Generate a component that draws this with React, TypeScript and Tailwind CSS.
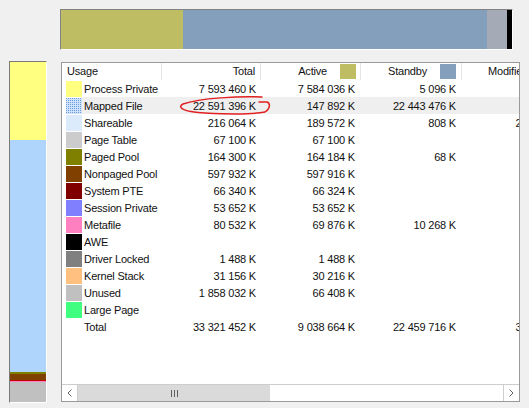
const rows: { name: string; color: string; total: string; active: string; standby: string; modified: string; pattern?: boolean }[] = [
  { name: "Process Private", color: "bg-[#ffff80]", total: "7 593 460 K", active: "7 584 036 K", standby: "5 096 K", modified: "4 328 K" },
  { name: "Mapped File", color: "bg-[#cfe2fb]", total: "22 591 396 K", active: "147 892 K", standby: "22 443 476 K", modified: "28 K", pattern: true },
  { name: "Shareable", color: "bg-[#dcebfc]", total: "216 064 K", active: "189 572 K", standby: "808 K", modified: "25 684 K" },
  { name: "Page Table", color: "bg-[#cccccc]", total: "67 100 K", active: "67 100 K", standby: "", modified: "" },
  { name: "Paged Pool", color: "bg-[#808000]", total: "164 300 K", active: "164 184 K", standby: "68 K", modified: "48 K" },
  { name: "Nonpaged Pool", color: "bg-[#804000]", total: "597 932 K", active: "597 916 K", standby: "", modified: "16 K" },
  { name: "System PTE", color: "bg-[#800000]", total: "66 340 K", active: "66 324 K", standby: "", modified: "16 K" },
  { name: "Session Private", color: "bg-[#8080ff]", total: "53 652 K", active: "53 652 K", standby: "", modified: "" },
  { name: "Metafile", color: "bg-[#ff80c0]", total: "80 532 K", active: "69 876 K", standby: "10 268 K", modified: "388 K" },
  { name: "AWE", color: "bg-black", total: "", active: "", standby: "", modified: "" },
  { name: "Driver Locked", color: "bg-[#808080]", total: "1 488 K", active: "1 488 K", standby: "", modified: "" },
  { name: "Kernel Stack", color: "bg-[#ffc080]", total: "31 156 K", active: "30 216 K", standby: "", modified: "940 K" },
  { name: "Unused", color: "bg-[#c0c0c0]", total: "1 858 032 K", active: "66 408 K", standby: "", modified: "" },
  { name: "Large Page", color: "bg-[#40ff80]", total: "", active: "", standby: "", modified: "" },
];

function Chevron({ left }: { left?: boolean }) {
  return (
    <svg width="5" height="8" viewBox="0 0 5 8">
      <path d={left ? "M4.5 0.5 L1 4 L4.5 7.5" : "M0.5 0.5 L4 4 L0.5 7.5"} fill="none" stroke="#606060" strokeWidth="1" />
    </svg>
  );
}

function DotSwatch() {
  return (
    <svg width="16" height="16">
      <defs>
        <pattern id="dots" width="2" height="2" patternUnits="userSpaceOnUse">
          <rect width="2" height="2" fill="#cfe2fb" />
          <rect width="1" height="1" fill="#6c9be0" />
        </pattern>
      </defs>
      <rect width="16" height="16" fill="url(#dots)" />
    </svg>
  );
}

export default function App() {
  return (
    <div className="relative w-[529px] h-[408px] overflow-hidden bg-[#f0f0f0] font-['Liberation_Sans',Arial,sans-serif] text-[11px] tracking-[-0.2px] text-[#111]">
      {/* top usage bar */}
      <div className="pt-[9px] pl-[60px]">
        <div className="flex w-[453px] h-[41px] border border-t-[#828282] border-l-[#828282] border-b-white border-r-white">
          <div className="w-[122px] bg-[#bfbd63]" />
          <div className="w-[304px] bg-[#839fbc]" />
          <div className="w-[20px] bg-[#a4abb6]" />
          <div className="w-[5px] bg-black" />
        </div>
      </div>

      <div className="flex mt-[11px]">
        {/* left vertical bar */}
        <div className="ml-[9px] w-[38px] h-[342px] flex flex-col border border-t-[#7a7a7a] border-l-[#7a7a7a] border-b-white border-r-white">
          <div className="h-[78px] bg-[#ffff80]" />
          <div className="h-[232px] bg-[#b0d5fc]" />
          <div className="h-[2px] bg-[#808000]" />
          <div className="h-[6px] bg-[#804000]" />
          <div className="h-[1px] bg-[#c00000]" />
          <div className="h-[1px] bg-[#ff80c0]" />
          <div className="h-[20px] bg-[#c0c0c0]" />
        </div>

        {/* table */}
        <div className="ml-[14px] mt-[1px] w-[459px] h-[340px] flex flex-col border border-[#9a9a9a] bg-white overflow-hidden">
          <div className="flex h-[17px] items-center whitespace-nowrap">
            <div className="w-[100px] shrink-0 h-full pl-[5px] flex items-center border-r border-[#e5e5e5]">Usage</div>
            <div className="w-[99px] shrink-0 h-full pr-[5px] flex items-center justify-end border-r border-[#e5e5e5]">Total</div>
            <div className="w-[100px] shrink-0 h-full flex items-center justify-end border-r border-[#e5e5e5]">
              <span className="mr-[13px]">Active</span>
              <div className="w-[16px] h-[15px] mr-[4px] bg-[#bfbd63]" />
            </div>
            <div className="w-[101px] shrink-0 h-full flex items-center justify-end border-r border-[#e5e5e5]">
              <span className="mr-[13px]">Standby</span>
              <div className="w-[16px] h-[15px] mr-[5px] bg-[#839fbc]" />
            </div>
            <div className="w-[100px] shrink-0 h-full flex items-center justify-end">
              <span className="mr-[13px]">Modified</span>
              <div className="w-[16px] h-[15px] mr-[5px] bg-[#d07070]" />
            </div>
          </div>

          {rows.map((r) => (
            <div key={r.name} className="flex h-[17px] pt-[1px] leading-[16px] whitespace-nowrap">
              <div className="w-[20px] shrink-0 pl-[4px]">
                {r.pattern ? <DotSwatch /> : <div className={`w-[16px] h-[16px] ${r.color}`} />}
              </div>
              <div className={`flex -mt-[1px] pt-[1px] h-[17px] ${r.name === "Mapped File" ? "bg-[#efefef]" : ""}`}>
                <div className="w-[80px] shrink-0 pl-[2px]">{r.name}</div>
                <div className="w-[99px] shrink-0 pr-[5px] text-right">{r.total}</div>
                <div className="w-[100px] shrink-0 pr-[6px] text-right">{r.active}</div>
                <div className="w-[101px] shrink-0 pr-[6px] text-right">{r.standby}</div>
                <div className="w-[100px] shrink-0 pr-[4px] text-right">{r.modified}</div>
              </div>
            </div>
          ))}
          <div className="flex h-[17px] pt-[1px] leading-[16px] whitespace-nowrap">
            <div className="w-[20px] shrink-0" />
            <div className="w-[80px] shrink-0 pl-[2px]">Total</div>
            <div className="w-[99px] shrink-0 pr-[5px] text-right">33 321 452 K</div>
            <div className="w-[100px] shrink-0 pr-[6px] text-right">9 038 664 K</div>
            <div className="w-[101px] shrink-0 pr-[6px] text-right">22 459 716 K</div>
            <div className="w-[100px] shrink-0 pr-[4px] text-right">31 448 K</div>
          </div>

          <div className="flex-1" />

          {/* horizontal scrollbar */}
          <div className="flex h-[17px] border-t border-[#cdcdcd]">
            <div className="w-[16px] bg-white border-r border-[#cdcdcd] flex items-center justify-center">
              <Chevron left />
            </div>
            <div className="w-[192px] bg-[#dadada] flex items-center justify-center gap-[2px]">
              <div className="w-[1px] h-[7px] bg-[#606060]" />
              <div className="w-[1px] h-[7px] bg-[#606060]" />
              <div className="w-[1px] h-[7px] bg-[#606060]" />
            </div>
            <div className="flex-1 bg-white" />
            <div className="w-[16px] bg-white border-l border-[#cdcdcd] flex items-center justify-center">
              <Chevron />
            </div>
          </div>
        </div>
      </div>

      {/* red hand-drawn annotation */}
      <svg className="absolute left-0 top-0 pointer-events-none" width="529" height="408">
        <path
          d="M262 97 C240 96 200 98 183 104 C176 108 185 112 205 113 C225 114 250 115 265 112 C271 108 270 103 267 102 L259 102"
          fill="none"
          stroke="#e02020"
          strokeWidth="1.5"
          strokeLinecap="round"
        />
      </svg>
    </div>
  );
}
